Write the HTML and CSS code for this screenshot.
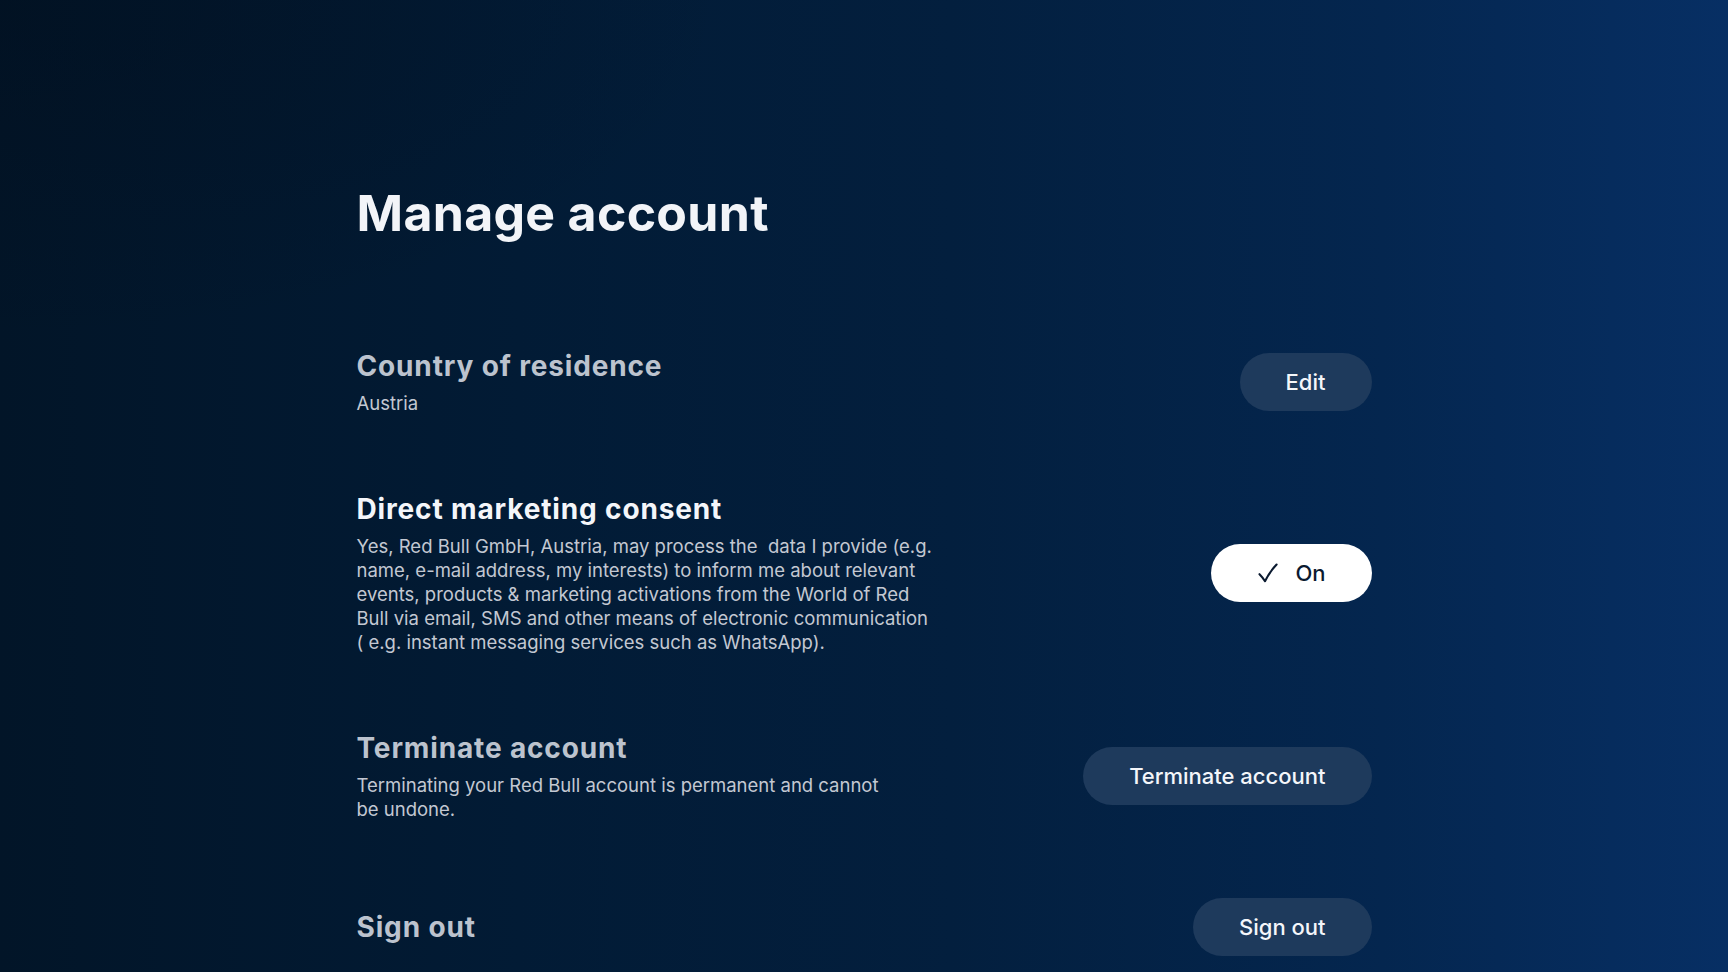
FILE: index.html
```html
<!DOCTYPE html>
<html lang="en">
<head>
<meta charset="utf-8">
<title>Manage account</title>
<link rel="stylesheet" href="styles.css">
</head>
<body>
<main class="page">
  <h1 class="title">Manage account</h1>
  <section class="rows">
    <div class="row">
      <div class="info">
        <h2 class="heading dim">Country of residence</h2>
        <p class="desc">Austria</p>
      </div>
      <button class="btn">Edit</button>
    </div>
    <div class="row">
      <div class="info">
        <h2 class="heading">Direct marketing consent</h2>
        <p class="desc wide">Yes, Red Bull GmbH, Austria, may process the &nbsp;data I provide (e.g. name, e-mail address, my interests) to inform me about relevant events, products &amp; marketing activations from the World of Red Bull via email, SMS and other means of electronic communication ( e.g. instant messaging services such as WhatsApp).</p>
      </div>
      <button class="btn btn-on">
        <svg class="check" viewBox="0 0 20 20" width="20" height="20" aria-hidden="true"><path d="M1.5 11.2 Q4.5 14.2 7 18.2 Q11.5 9 18.6 1.6" fill="none" stroke="#0b1a30" stroke-width="2.1" stroke-linecap="round" stroke-linejoin="round"/></svg>
        <span>On</span>
      </button>
    </div>
    <div class="row">
      <div class="info">
        <h2 class="heading dim">Terminate account</h2>
        <p class="desc narrow">Terminating your Red Bull account is permanent and cannot be undone.</p>
      </div>
      <button class="btn">Terminate account</button>
    </div>
    <div class="row">
      <div class="info">
        <h2 class="heading dim">Sign out</h2>
      </div>
      <button class="btn">Sign out</button>
    </div>
  </section>
</main>
</body>
</html>
```
FILE: styles.css
```css
html, body {
  margin: 0;
  padding: 0;
  height: 100%;
}
body {
  font-family: Inter, "Noto Sans", "Liberation Sans", sans-serif;
  color: #f2f4f8;
  overflow: hidden;
  background:
    radial-gradient(ellipse 60% 50% at 0% 0%, rgba(1, 12, 26, 0.35), rgba(1, 12, 26, 0) 70%),
    linear-gradient(90deg, #021528 0%, #021b35 30%, #031f3e 55%, #04264f 80%, #072f64 100%);
}
.page {
  width: 1015px;
  margin: 0 auto;
  padding-top: 183px;
}
.title {
  margin: 0;
  font-size: 50px;
  line-height: 60px;
  font-weight: 700;
  color: #f2f4f8;
  letter-spacing: 0.3px;
}
.rows {
  margin-top: 106px;
  display: flex;
  flex-direction: column;
  gap: 77px;
}
.row {
  display: flex;
  align-items: center;
  justify-content: space-between;
}
.info {
  display: flex;
  flex-direction: column;
  gap: 8px;
}
.heading {
  margin: 0;
  font-size: 28px;
  line-height: 34px;
  font-weight: 700;
  letter-spacing: 0.85px;
  color: #f4f6fa;
}
.heading.dim {
  color: #bcc3ce;
}
.desc {
  margin: 0;
  font-size: 18.5px;
  line-height: 24px;
  font-weight: 400;
  color: #c3c8d2;
}
.desc.wide {
  max-width: 578px;
}
.desc.narrow {
  max-width: 545px;
}
.btn {
  height: 58px;
  padding: 0 46px;
  border: none;
  border-radius: 29px;
  background: #1e3a5c;
  color: #f4f6fa;
  font-family: Inter, "Noto Sans", "Liberation Sans", sans-serif;
  font-size: 22px;
  font-weight: 500;
  display: inline-flex;
  align-items: center;
  gap: 17px;
  flex-shrink: 0;
}
.btn-on {
  background: #ffffff;
  color: #0b1a30;
  padding: 0 46px 0 47px;
}
.check {
  display: block;
}
```
